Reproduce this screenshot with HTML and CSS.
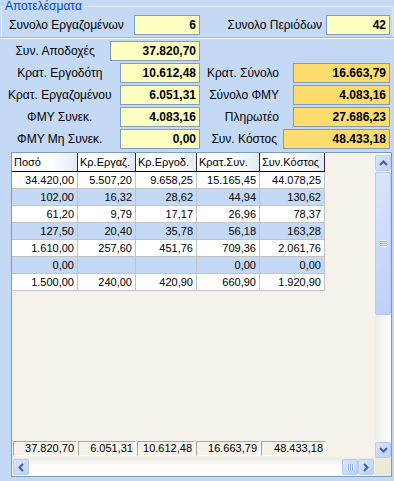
FILE: index.html
```html
<!DOCTYPE html>
<html lang="el">
<head>
    <meta charset="UTF-8">
    <title>Αποτελέσματα</title>
    <link rel="stylesheet" href="styles.css">
</head>
<body>
    <fieldset class="group">
        <legend>Αποτελέσματα</legend>
        <div class="totals">
            <span class="totals-label">Συνολο Εργαζομένων</span>
            <span class="box box-emp">6</span>
            <span class="totals-label totals-label-right">Συνολο Περιόδων</span>
            <span class="box box-per">42</span>
        </div>
    </fieldset>
    <div class="sep"></div>

    <div class="sums">
        <div class="col col-left">
            <div class="field"><span class="field-label">Συν. Αποδοχές</span><span class="box w-wide">37.820,70</span></div>
            <div class="field"><span class="field-label">Κρατ. Εργοδότη</span><span class="box w-left">10.612,48</span></div>
            <div class="field"><span class="field-label">Κρατ. Εργαζομένου</span><span class="box w-left">6.051,31</span></div>
            <div class="field"><span class="field-label">ΦΜΥ Συνεκ.</span><span class="box w-left">4.083,16</span></div>
            <div class="field"><span class="field-label">ΦΜΥ Μη Συνεκ.</span><span class="box w-left">0,00</span></div>
        </div>
        <div class="col col-right">
            <div class="field"><span class="field-label">Κρατ. Σύνολο</span><span class="box box-sum w-right">16.663,79</span></div>
            <div class="field"><span class="field-label">Σύνολο ΦΜΥ</span><span class="box box-sum w-right">4.083,16</span></div>
            <div class="field"><span class="field-label">Πληρωτέο</span><span class="box box-sum w-right">27.686,23</span></div>
            <div class="field field-cost"><span class="field-label">Συν. Κόστος</span><span class="box box-sum w-cost">48.433,18</span></div>
        </div>
    </div>

    <div class="grid">
        <div class="grid-main">
            <div class="row head">
                <div class="cell">Ποσό</div>
                <div class="cell">Κρ.Εργαζ.</div>
                <div class="cell">Κρ.Εργοδ.</div>
                <div class="cell">Κρατ.Συν.</div>
                <div class="cell">Συν.Κόστος</div>
            </div>
            <div class="row">
                <div class="cell">34.420,00</div><div class="cell">5.507,20</div><div class="cell">9.658,25</div><div class="cell">15.165,45</div><div class="cell">44.078,25</div>
            </div>
            <div class="row alt">
                <div class="cell">102,00</div><div class="cell">16,32</div><div class="cell">28,62</div><div class="cell">44,94</div><div class="cell">130,62</div>
            </div>
            <div class="row">
                <div class="cell">61,20</div><div class="cell">9,79</div><div class="cell">17,17</div><div class="cell">26,96</div><div class="cell">78,37</div>
            </div>
            <div class="row alt">
                <div class="cell">127,50</div><div class="cell">20,40</div><div class="cell">35,78</div><div class="cell">56,18</div><div class="cell">163,28</div>
            </div>
            <div class="row">
                <div class="cell">1.610,00</div><div class="cell">257,60</div><div class="cell">451,76</div><div class="cell">709,36</div><div class="cell">2.061,76</div>
            </div>
            <div class="row alt">
                <div class="cell">0,00</div><div class="cell"></div><div class="cell"></div><div class="cell">0,00</div><div class="cell">0,00</div>
            </div>
            <div class="row">
                <div class="cell">1.500,00</div><div class="cell">240,00</div><div class="cell">420,90</div><div class="cell">660,90</div><div class="cell">1.920,90</div>
            </div>

            <div class="footer">
                <div class="foot-cell">37.820,70</div>
                <div class="foot-cell">6.051,31</div>
                <div class="foot-cell">10.612,48</div>
                <div class="foot-cell">16.663,79</div>
                <div class="foot-cell">48.433,18</div>
            </div>
        </div>

        <div class="vscroll">
            <div class="sbtn">
                <svg width="9" height="6" viewBox="0 0 9 6"><polyline points="1,5 4.5,1.5 8,5" fill="none" stroke="#4d6185" stroke-width="2"/></svg>
            </div>
            <div class="thumb thumb-v">
                <span class="grip-v"></span>
            </div>
            <div class="track"></div>
            <div class="sbtn">
                <svg width="9" height="6" viewBox="0 0 9 6"><polyline points="1,1 4.5,4.5 8,1" fill="none" stroke="#4d6185" stroke-width="2"/></svg>
            </div>
        </div>

        <div class="hscroll">
            <div class="sbtn">
                <svg width="6" height="9" viewBox="0 0 6 9"><polyline points="5,1 1.5,4.5 5,8" fill="none" stroke="#4d6185" stroke-width="2"/></svg>
            </div>
            <div class="track"></div>
            <div class="thumb thumb-h">
                <span class="grip-h"></span>
            </div>
            <div class="sbtn">
                <svg width="6" height="9" viewBox="0 0 6 9"><polyline points="1,1 4.5,4.5 1,8" fill="none" stroke="#4d6185" stroke-width="2"/></svg>
            </div>
        </div>

        <div class="corner"></div>
    </div>
</body>
</html>
```

FILE: styles.css
```css
body {
    margin: 0;
    width: 394px;
    height: 481px;
    overflow: hidden;
    background-color: #c4d9f6;
    font-family: "Liberation Sans", Arial, sans-serif;
    font-size: 12px;
    color: #000;
}

/* top group box */
.group {
    margin: 0 1px;
    padding: 0 0 2px;
    border: 1px solid #dfe9f8;
    border-bottom: none;
    min-width: 0;
}
.group legend {
    padding: 0 1px;
    margin-left: 2px;
    color: #0046d5;
    font-size: 12px;
    line-height: 12px;
}
.totals {
    display: flex;
    align-items: center;
    height: 20px;
    margin-top: 3px;
    padding: 0 2px 0 7px;
}
.totals-label {
    width: 125px;
}
.totals-label-right {
    width: auto;
    flex: 1;
    text-align: right;
    padding-right: 4px;
}
.box-emp {
    width: 66px;
}
.box-per {
    width: 64px;
}

.sep {
    border-top: 1px solid #a3b2c8;
    border-bottom: 1px solid #fff;
}

/* value boxes */
.box {
    box-sizing: border-box;
    height: 20px;
    line-height: 18px;
    border: 1px solid #7f9db9;
    background-color: #ffffc1;
    padding-right: 3px;
    text-align: right;
    font-weight: bold;
}
.box-sum {
    background-color: #fddc6e;
}
.w-wide { width: 99px; }
.w-left { width: 82px; }
.w-right { width: 97px; }
.w-cost { width: 107px; }

.sums {
    display: flex;
    margin-top: 2px;
}
.col-left {
    width: 200px;
}
.col-right {
    width: 190px;
    padding-top: 22px;
}
.field {
    display: flex;
    align-items: center;
    height: 20px;
    margin-bottom: 2px;
}
.col-left .field-label {
    width: 122px;
    text-align: center;
    white-space: nowrap;
}
.col-left .box {
    margin-left: auto;
}
.col-right .field {
    justify-content: flex-end;
}
.col-right .field-label {
    margin-right: 14px;
}
.col-right .field-cost .field-label {
    margin-right: 6px;
}

/* data grid */
.grid {
    box-sizing: border-box;
    margin: 1px 0 0 11px;
    width: 381px;
    height: 325px;
    border: 1px solid #7f9db9;
    display: grid;
    grid-template-columns: 363px 16px;
    grid-template-rows: 305px 18px;
    font-size: 11px;
}
.grid-main {
    background-color: #f4f2eb;
    display: flex;
    flex-direction: column;
}
.row {
    display: grid;
    grid-template-columns: 66px 58px 61px 63px 65px;
    width: 313px;
    background-color: #fff;
}
.row.alt {
    background-color: #c4d9f6;
}
.cell {
    box-sizing: border-box;
    height: 17px;
    line-height: 16px;
    border-right: 1px solid #c3c3c3;
    border-bottom: 1px solid #c3c3c3;
    text-align: right;
    padding-right: 3px;
    white-space: nowrap;
}
.head .cell {
    height: 19px;
    line-height: 18px;
    text-align: left;
    padding: 0 0 0 2px;
    border-right: 1px solid #2a2a2a;
    border-bottom: 1px solid #000;
    background: linear-gradient(to right, #fdfdfe 60%, #e3eaf6);
}

.footer {
    margin-top: auto;
    margin-bottom: 2px;
    padding-left: 1px;
    display: grid;
    grid-template-columns: 64px 58px 58px 64px 65px;
    column-gap: 1px;
}
.foot-cell {
    box-sizing: border-box;
    height: 15px;
    line-height: 13px;
    border-top: 1px solid #aca899;
    border-left: 1px solid #aca899;
    border-bottom: 1px solid #fff;
    border-right: 1px solid #fff;
    text-align: right;
    padding-right: 2px;
}

/* scrollbars */
.vscroll {
    display: flex;
    flex-direction: column;
    padding-top: 2px;
    background: linear-gradient(to right, #efeee8, #fdfdfc);
}
.hscroll {
    display: flex;
    align-items: flex-start;
    padding: 1px 1px 0;
    background: linear-gradient(to bottom, #eceae2, #fdfdfc 40%);
}
.corner {
    background-color: #ece9d8;
}
.track {
    flex: 1;
}
.sbtn, .thumb {
    box-sizing: border-box;
    width: 16px;
    height: 16px;
    border: 1px solid #b7cbf4;
    border-radius: 2px;
    background: linear-gradient(135deg, #d9e5fe, #bcd0fb);
    display: flex;
    align-items: center;
    justify-content: center;
}
.vscroll .sbtn:last-child {
    margin-bottom: 0;
}
.thumb-v {
    height: 143px;
    margin-top: 1px;
}
.grip-v {
    width: 7px;
    height: 7px;
    background: repeating-linear-gradient(to bottom, #eef3ff 0 1px, #8da9e6 1px 2px);
}
.grip-h {
    width: 7px;
    height: 7px;
    background: repeating-linear-gradient(to right, #eef3ff 0 1px, #8da9e6 1px 2px);
}
```
